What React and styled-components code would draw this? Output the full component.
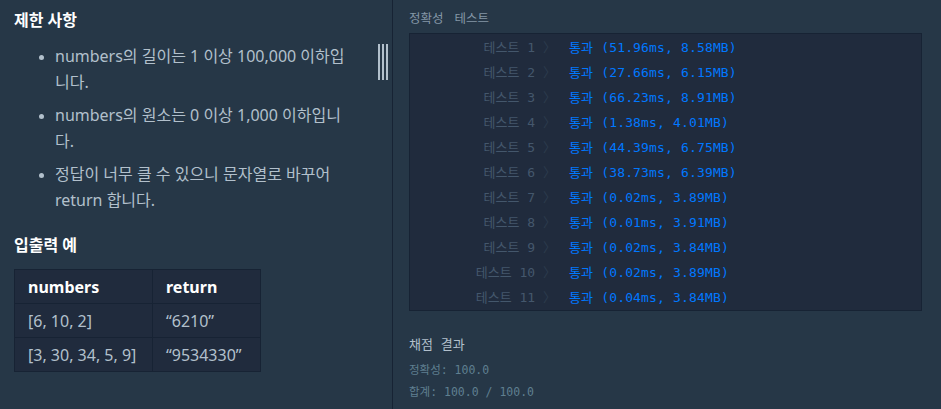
import React from "react";
import styled, { createGlobalStyle } from "styled-components";

const tests = [
  ["1", "51.96ms, 8.58MB"],
  ["2", "27.66ms, 6.15MB"],
  ["3", "66.23ms, 8.91MB"],
  ["4", "1.38ms, 4.01MB"],
  ["5", "44.39ms, 6.75MB"],
  ["6", "38.73ms, 6.39MB"],
  ["7", "0.02ms, 3.89MB"],
  ["8", "0.01ms, 3.91MB"],
  ["9", "0.02ms, 3.84MB"],
  ["10", "0.02ms, 3.89MB"],
  ["11", "0.04ms, 3.84MB"],
];

const examples = [
  ["[6, 10, 2]", "“6210”"],
  ["[3, 30, 34, 5, 9]", "“9534330”"],
];

function App() {
  return (
    <>
      <GlobalStyle />
      <Page>
        <Guide>
          <Heading>제한 사항</Heading>
          <Rules>
            <li>numbers의 길이는 1 이상 100,000 이하입니다.</li>
            <li>numbers의 원소는 0 이상 1,000 이하입니다.</li>
            <li>정답이 너무 클 수 있으니 문자열로 바꾸어 return 합니다.</li>
          </Rules>
          <Heading>입출력 예</Heading>
          <Examples>
            <thead>
              <tr>
                <th>numbers</th>
                <th>return</th>
              </tr>
            </thead>
            <tbody>
              {examples.map(([a, b]) => (
                <tr key={a}>
                  <td>{a}</td>
                  <td>{b}</td>
                </tr>
              ))}
            </tbody>
          </Examples>
          <Gutter>
            <span />
            <span />
            <span />
          </Gutter>
        </Guide>
        <Console>
          <ConsoleTitle>
            <span>정확성</span>
            <span>테스트</span>
          </ConsoleTitle>
          <ResultBox>
            {tests.map(([n, r]) => (
              <ResultRow key={n}>
                <Label>
                  테스트 {n} <Chevron>〉</Chevron>
                </Label>
                <Pass>통과 ({r})</Pass>
              </ResultRow>
            ))}
          </ResultBox>
          <Summary>
            <SummaryTitle>채점 결과</SummaryTitle>
            <SummaryLine>정확성: 100.0</SummaryLine>
            <SummaryLine>합계: 100.0 / 100.0</SummaryLine>
          </Summary>
        </Console>
      </Page>
    </>
  );
}

export default App;

const GlobalStyle = createGlobalStyle`
  html, body {
    margin: 0;
    background: #263747;
  }
  body {
    font-family: "Noto Sans", "Noto Sans CJK KR", sans-serif;
  }
`;

const Page = styled.div`
  display: flex;
  width: 941px;
  height: 409px;
  overflow: hidden;
  background: #263747;
`;

const Guide = styled.div`
  position: relative;
  box-sizing: border-box;
  width: 393px;
  flex-shrink: 0;
  padding: 8px 0 0 14px;
  border-right: 1px solid #172334;
`;

const Heading = styled.h5`
  margin: 0;
  font-size: 16px;
  line-height: 24px;
  font-weight: 700;
  color: #ffffff;
`;

const Rules = styled.ul`
  margin: 11px 0 20px;
  padding: 0 40px 0 41px;
  color: #b2c0cc;
  font-size: 16px;
  line-height: 26px;
  li {
    margin-bottom: 7px;
  }
  li::marker {
    font-size: 13px;
  }
`;

const Examples = styled.table`
  margin-top: 12px;
  border-collapse: collapse;
  background: #202b3d;
  font-size: 16px;
  th,
  td {
    height: 33px;
    padding: 0 13px;
    border: 1px solid #172334;
    text-align: left;
  }
  th {
    color: #ffffff;
    font-weight: 700;
  }
  td {
    color: #b2c0cc;
  }
  th:first-child {
    width: 111px;
  }
  th:last-child {
    width: 81px;
  }
`;

const Gutter = styled.div`
  position: absolute;
  top: 44px;
  right: 4px;
  display: flex;
  gap: 2px;
  span {
    width: 2px;
    height: 36px;
    background: #b2c0cc;
  }
`;

const Console = styled.div`
  flex: 1;
  padding: 9px 19px 0 16px;
  font-family: "DejaVu Sans Mono", "Noto Sans CJK KR", monospace;
`;

const ConsoleTitle = styled.div`
  display: flex;
  gap: 11px;
  font-size: 12.5px;
  line-height: 20px;
  color: #8496a6;
  margin-bottom: 4px;
`;

const ResultBox = styled.div`
  background: #202b3d;
  border: 1px solid #172334;
  padding-bottom: 1px;
`;

const ResultRow = styled.div`
  display: flex;
  align-items: center;
  height: 25px;
  font-size: 13px;
  gap: 13px;
`;

const Label = styled.div`
  width: 146px;
  text-align: right;
  color: #44576c;
  white-space: nowrap;
`;

const Chevron = styled.span`
  color: #2c3b4d;
`;

const Pass = styled.div`
  color: #0078ff;
  white-space: nowrap;
  letter-spacing: 0.15px;
`;

const Summary = styled.div`
  margin-top: 22px;
`;

const SummaryTitle = styled.div`
  font-size: 13px;
  line-height: 24px;
  color: #b2c0cc;
  margin-bottom: 2px;
`;

const SummaryLine = styled.div`
  font-size: 11.5px;
  line-height: 22px;
  color: #5f7f90;
`;
